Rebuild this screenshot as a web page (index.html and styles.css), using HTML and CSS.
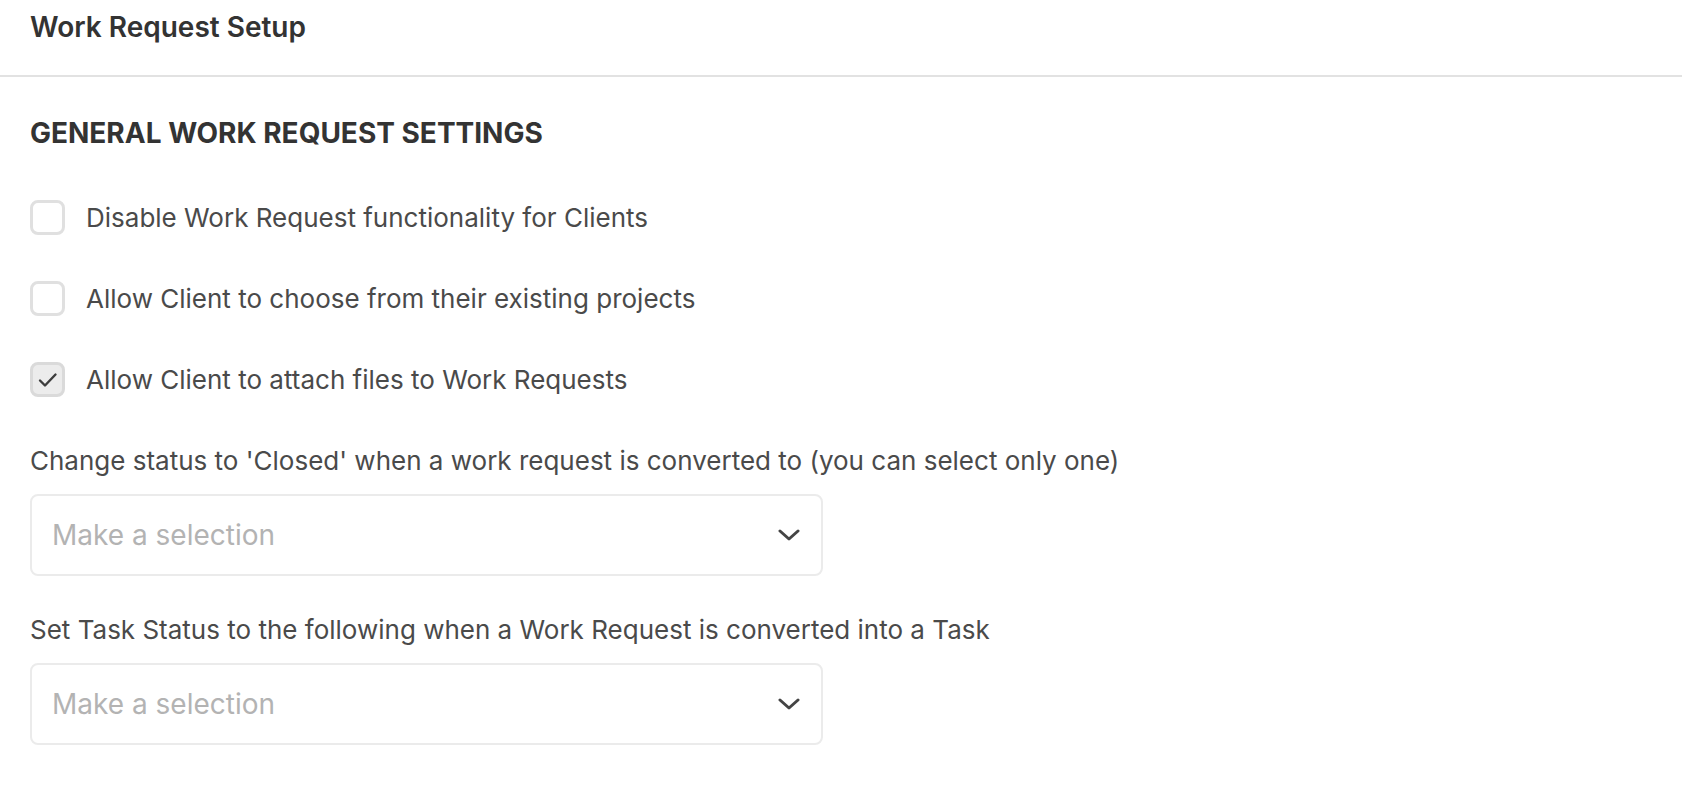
FILE: index.html
```html
<!DOCTYPE html>
<html lang="en">
<head>
    <meta charset="UTF-8">
    <meta name="viewport" content="width=device-width, initial-scale=1.0">
    <title>Work Request Setup</title>
    <link rel="stylesheet" href="styles.css">
</head>
<body>
    <div class="page-header">
        <h1>Work Request Setup</h1>
    </div>

    <div class="content">
        <h2>GENERAL WORK REQUEST SETTINGS</h2>

        <div class="options">
            <label class="option">
                <span class="box"></span>
                <span>Disable Work Request functionality for Clients</span>
            </label>
            <label class="option">
                <span class="box"></span>
                <span>Allow Client to choose from their existing projects</span>
            </label>
            <label class="option">
                <span class="box checked">
                    <svg width="35" height="35" viewBox="0 0 35 35"><path d="M10 18.5 L15 23.5 L25.5 12.5" fill="none" stroke="#3d3d3d" stroke-width="2.4" stroke-linecap="round" stroke-linejoin="round"/></svg>
                </span>
                <span>Allow Client to attach files to Work Requests</span>
            </label>
        </div>

        <div class="field">
            <p class="field-label">Change status to 'Closed' when a work request is converted to (you can select only one)</p>
            <div class="select">
                <span class="placeholder">Make a selection</span>
                <svg width="22" height="12" viewBox="0 0 22 12"><path d="M2 2 L11 10 L20 2" fill="none" stroke="#444" stroke-width="3" stroke-linecap="round" stroke-linejoin="round"/></svg>
            </div>
        </div>

        <div class="field">
            <p class="field-label">Set Task Status to the following when a Work Request is converted into a Task</p>
            <div class="select">
                <span class="placeholder">Make a selection</span>
                <svg width="22" height="12" viewBox="0 0 22 12"><path d="M2 2 L11 10 L20 2" fill="none" stroke="#444" stroke-width="3" stroke-linecap="round" stroke-linejoin="round"/></svg>
            </div>
        </div>
    </div>
</body>
</html>
```

FILE: styles.css
```css
body { margin: 0; background: #fff; font-family: Inter, "Liberation Sans", sans-serif; color: #333; }
.page-header { height: 77px; padding: 10px 30px 0; box-sizing: border-box; border-bottom: 2px solid #e2e2e2; }
.page-header h1 { margin: 0; font-size: 28px; line-height: 34px; font-weight: 600; color: #333; }
.content { padding: 39px 30px 0; }
.content h2 { margin: 0; font-size: 28px; line-height: 34px; font-weight: 700; color: #333; }
.options { display: flex; flex-direction: column; gap: 46px; margin-top: 50px; }
.option { display: flex; align-items: center; gap: 21px; font-size: 26px; line-height: 31px; color: #4a4a4a; }
.box { width: 35px; height: 35px; box-sizing: border-box; border: 3px solid #e0e0e0; border-radius: 8px; flex-shrink: 0; position: relative; }
.box.checked { background: #ececec; border-color: #dadada; }
.box svg { position: absolute; left: -3px; top: -3px; }
.field { margin-top: 48px; }
.field + .field { margin-top: 38px; }
.field-label { margin: 0; font-size: 26px; line-height: 31px; color: #4a4a4a; }
.select { display: flex; align-items: center; justify-content: space-between; width: 793px; height: 82px; box-sizing: border-box; margin-top: 18px; padding: 0 21px 0 20px; border: 2px solid #ebebeb; border-radius: 8px; }
.placeholder { font-size: 28px; color: #b3b3b3; }
```
